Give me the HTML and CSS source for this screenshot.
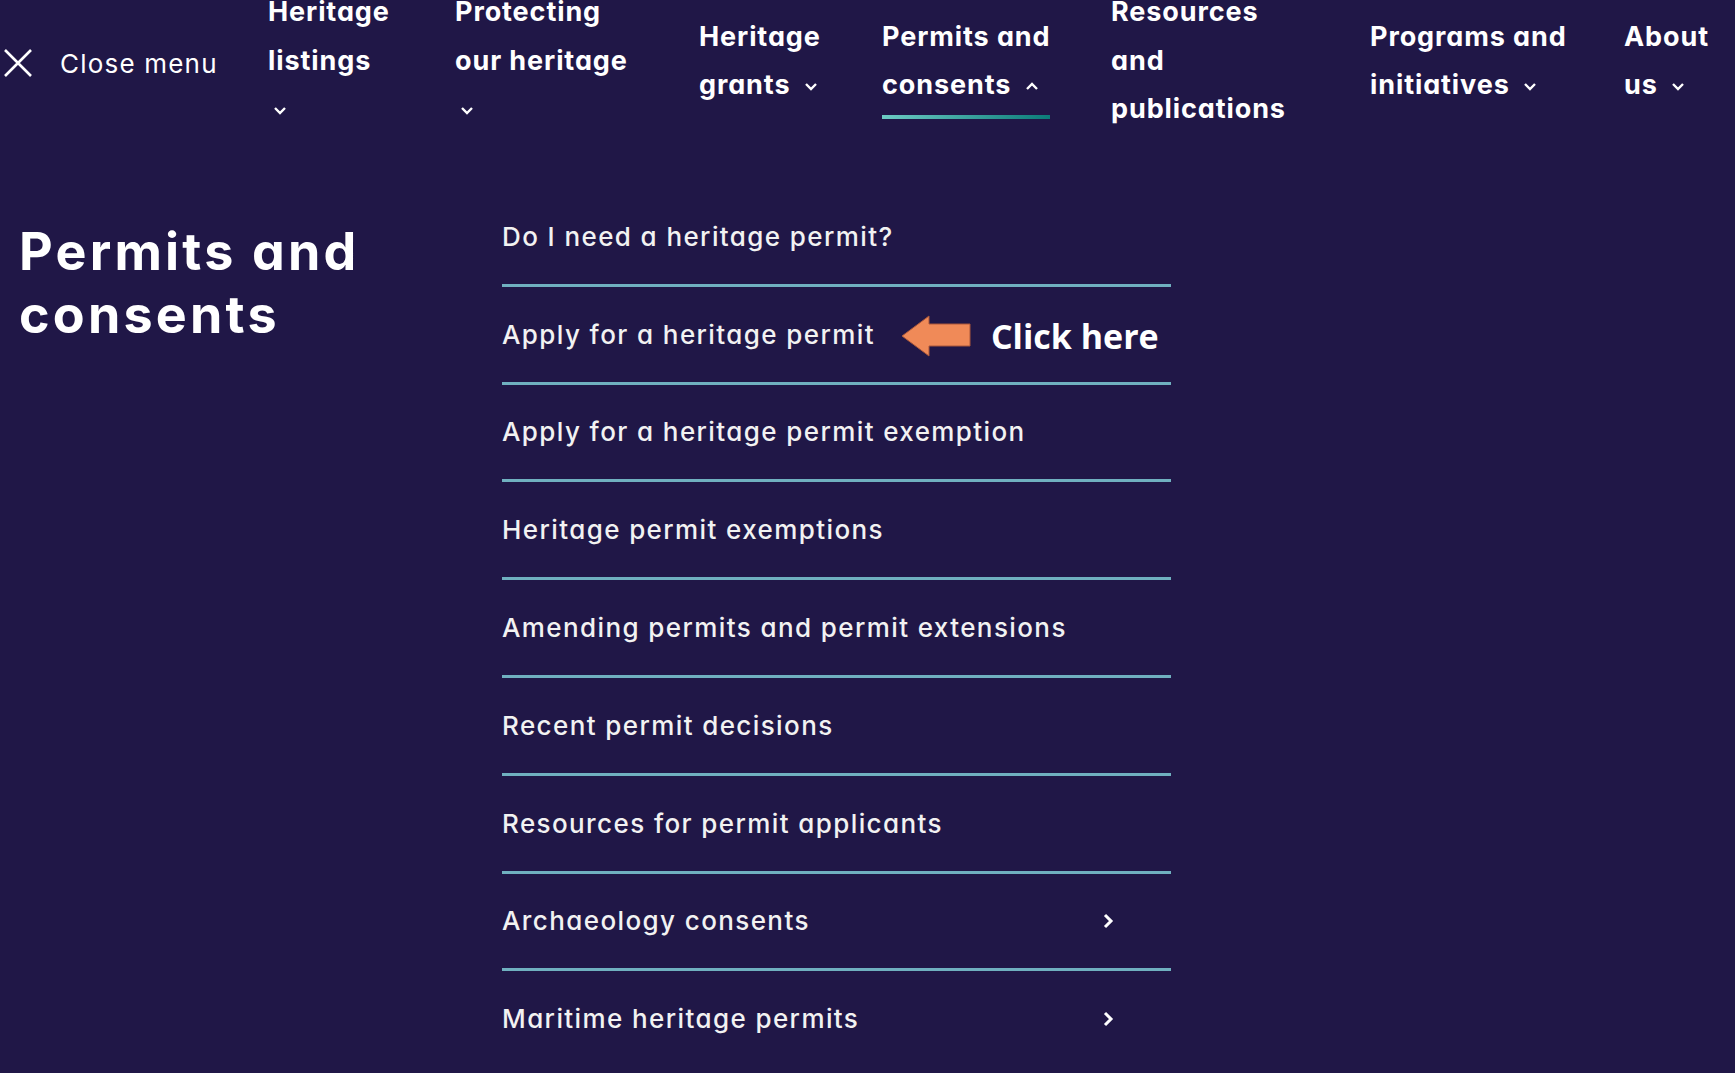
FILE: index.html
```html
<!DOCTYPE html>
<html lang="en">
<head>
    <meta charset="UTF-8">
    <meta name="viewport" content="width=device-width, initial-scale=1.0">
    <title>Permits and consents</title>
    <link rel="stylesheet" href="styles.css">
</head>
<body>
    <div class="page">
        <header class="topbar">
            <button class="close-btn" type="button">
                <svg class="close-icon" width="30" height="30" viewBox="0 0 30 30"><path d="M2 2 L28 28 M28 2 L2 28"/></svg>
                <span>Close menu</span>
            </button>
            <nav class="main-nav">
                <a class="nav-item" href="#"><span class="nav-label">Heritage<br>listings<br><svg class="chev chev-wrap" viewBox="0 0 14 9"><path d="M2 2 L7 7 L12 2"/></svg></span></a>
                <a class="nav-item" href="#"><span class="nav-label">Protecting<br>our heritage<br><svg class="chev chev-wrap" viewBox="0 0 14 9"><path d="M2 2 L7 7 L12 2"/></svg></span></a>
                <a class="nav-item" href="#"><span class="nav-label">Heritage<br>grants <svg class="chev" viewBox="0 0 14 9"><path d="M2 2 L7 7 L12 2"/></svg></span></a>
                <a class="nav-item active" href="#"><span class="nav-label">Permits and<br>consents <svg class="chev" viewBox="0 0 14 9"><path d="M2 7 L7 2 L12 7"/></svg></span></a>
                <a class="nav-item" href="#"><span class="nav-label">Resources<br>and<br>publications</span></a>
                <a class="nav-item" href="#"><span class="nav-label">Programs and<br>initiatives <svg class="chev" viewBox="0 0 14 9"><path d="M2 2 L7 7 L12 2"/></svg></span></a>
                <a class="nav-item" href="#"><span class="nav-label">About<br>us <svg class="chev" viewBox="0 0 14 9"><path d="M2 2 L7 7 L12 2"/></svg></span></a>
            </nav>
        </header>

        <main class="panel">
            <h1 class="panel-title">Permits and<br>consents</h1>
            <ul class="sub-menu">
                <li><a href="#">Do I need a heritage permit?</a></li>
                <li>
                    <a href="#">
                        <span>Apply for a heritage permit</span>
                        <span class="callout">
                            <svg class="callout-arrow" width="70" height="42" viewBox="0 0 70 42"><polygon points="1,21 28,1 28,9 69,9 69,31 28,31 28,41"/></svg>
                            <span class="callout-text">Click here</span>
                        </span>
                    </a>
                </li>
                <li><a href="#">Apply for a heritage permit exemption</a></li>
                <li><a href="#">Heritage permit exemptions</a></li>
                <li><a href="#">Amending permits and permit extensions</a></li>
                <li><a href="#">Recent permit decisions</a></li>
                <li><a href="#">Resources for permit applicants</a></li>
                <li><a class="has-sub" href="#">Archaeology consents <svg class="arrow-right" width="11" height="16" viewBox="0 0 11 16"><path d="M2 2 L8 8 L2 14"/></svg></a></li>
                <li><a class="has-sub" href="#">Maritime heritage permits <svg class="arrow-right" width="11" height="16" viewBox="0 0 11 16"><path d="M2 2 L8 8 L2 14"/></svg></a></li>
            </ul>
        </main>
    </div>
</body>
</html>
```

FILE: styles.css
```css
body {
    margin: 0;
    background: #fff;
    font-family: Inter, "Noto Sans", sans-serif;
    font-feature-settings: "cv11";
}
.page {
    background: #201747;
    color: #fff;
}
.topbar {
    display: flex;
    align-items: center;
    height: 122px;
}
.close-btn {
    display: flex;
    align-items: center;
    gap: 27px;
    width: 268px;
    padding: 4px 0 0 3px;
    background: none;
    border: none;
    color: #fff;
    font-family: inherit;
    font-size: 26px;
    letter-spacing: 1.2px;
    cursor: pointer;
}
.close-icon path {
    stroke: #fff;
    stroke-width: 2.6;
    fill: none;
}
.main-nav {
    display: grid;
    grid-template-columns: 187px 244px 183px 229px 259px 254px auto;
    align-items: center;
}
.nav-item {
    color: #fff;
    text-decoration: none;
    font-size: 27px;
    font-weight: 700;
    line-height: 48.5px;
    letter-spacing: 0.9px;
}
.nav-label {
    position: relative;
    display: inline-block;
}
.nav-item.active .nav-label::after {
    content: "";
    position: absolute;
    left: 0;
    right: 0;
    bottom: -9px;
    height: 4px;
    background: linear-gradient(90deg, #6ccbc4, #0b7c79);
}
.chev {
    width: 14px;
    height: 9px;
    margin-left: 6px;
    vertical-align: middle;
}
.chev-wrap {
    margin-left: 5px;
}
.chev path {
    stroke: #fff;
    stroke-width: 2.4;
    fill: none;
}
.panel {
    display: flex;
    padding: 67px 0 7px 19px;
}
.panel-title {
    flex: 0 0 483px;
    margin: 31px 0 0;
    font-size: 52px;
    line-height: 63px;
    font-weight: 700;
    letter-spacing: 3.2px;
}
.sub-menu {
    width: 669px;
    margin: 0;
    padding: 0;
    list-style: none;
}
.sub-menu li {
    border-bottom: 3px solid #70b0c0;
}
.sub-menu li:last-child {
    border-bottom: none;
}
.sub-menu a {
    display: flex;
    align-items: center;
    height: 94.8px;
    padding-right: 57px;
    color: #f2f2f2;
    text-decoration: none;
    font-size: 26px;
    font-weight: 500;
    letter-spacing: 1.4px;
    white-space: nowrap;
}
.sub-menu a.has-sub {
    justify-content: space-between;
}
.arrow-right path {
    stroke: #fff;
    stroke-width: 3;
    fill: none;
}
.callout {
    display: flex;
    align-items: center;
    gap: 20px;
    margin-left: 26px;
    margin-top: 4px;
}
.callout-arrow polygon {
    fill: #f08a58;
    stroke: #a9573a;
    stroke-width: 1;
}
.callout-text {
    font-family: "Open Sans", sans-serif;
    font-size: 34px;
    font-weight: 700;
    letter-spacing: 0;
    color: #fff;
}
```
